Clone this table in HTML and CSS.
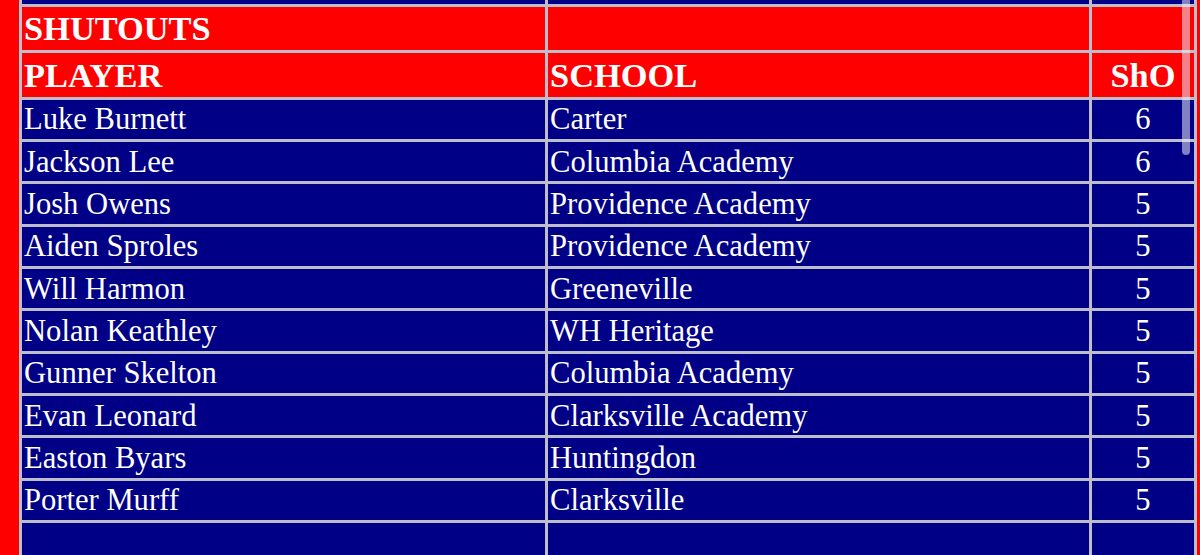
FILE: index.html
```html
<!DOCTYPE html>
<html>
<head>
<meta charset="utf-8">
<link rel="stylesheet" href="styles.css">
</head>
<body>
<table class="stats">
  <colgroup>
    <col class="c-player">
    <col class="c-school">
    <col class="c-num">
  </colgroup>
  <tr class="row body-row"><td></td><td></td><td></td></tr>
  <tr class="row head-row"><th>SHUTOUTS</th><th></th><th></th></tr>
  <tr class="row head-row"><th>PLAYER</th><th>SCHOOL</th><th class="num">ShO</th></tr>
  <tr class="row body-row"><td>Luke Burnett</td><td>Carter</td><td class="num">6</td></tr>
  <tr class="row body-row"><td>Jackson Lee</td><td>Columbia Academy</td><td class="num">6</td></tr>
  <tr class="row body-row"><td>Josh Owens</td><td>Providence Academy</td><td class="num">5</td></tr>
  <tr class="row body-row"><td>Aiden Sproles</td><td>Providence Academy</td><td class="num">5</td></tr>
  <tr class="row body-row"><td>Will Harmon</td><td>Greeneville</td><td class="num">5</td></tr>
  <tr class="row body-row"><td>Nolan Keathley</td><td>WH Heritage</td><td class="num">5</td></tr>
  <tr class="row body-row"><td>Gunner Skelton</td><td>Columbia Academy</td><td class="num">5</td></tr>
  <tr class="row body-row"><td>Evan Leonard</td><td>Clarksville Academy</td><td class="num">5</td></tr>
  <tr class="row body-row"><td>Easton Byars</td><td>Huntingdon</td><td class="num">5</td></tr>
  <tr class="row body-row"><td>Porter Murff</td><td>Clarksville</td><td class="num">5</td></tr>
  <tr class="row body-row"><td></td><td></td><td></td></tr>
</table>
<div class="scrollbar"></div>
</body>
</html>
```
FILE: styles.css
```css
html, body {
  margin: 0;
  padding: 0;
  height: 555px;
  overflow: hidden;
  background: #ff0000;
}

body {
  position: relative;
  font-family: "Liberation Serif", "Times New Roman", serif;
  color: #ffffff;
}

.stats {
  table-layout: fixed;
  width: 1178px;
  margin: -38.83px 0 0 19px;
  border-collapse: separate;
  border-spacing: 3px;
  background: #bdbdcc;
}

.c-player { width: 523px; }
.c-school { width: 541px; }
.c-num { width: 102px; }

.stats td,
.stats th {
  padding: 0 2px;
  vertical-align: middle;
  text-align: left;
  white-space: nowrap;
  overflow: hidden;
}

.body-row td {
  height: 39.33px;
  background: #000086;
  font-size: 30.6px;
  line-height: 34px;
  font-weight: normal;
}

.head-row th {
  height: 43.67px;
  background: #ff0000;
  font-size: 34.4px;
  line-height: 38px;
  font-weight: bold;
}

.stats .num {
  text-align: center;
}

.scrollbar {
  position: absolute;
  top: 0;
  left: 1182px;
  width: 8px;
  height: 155px;
  border-radius: 0 0 4px 4px;
  background: rgba(235, 235, 245, 0.55);
}
```
